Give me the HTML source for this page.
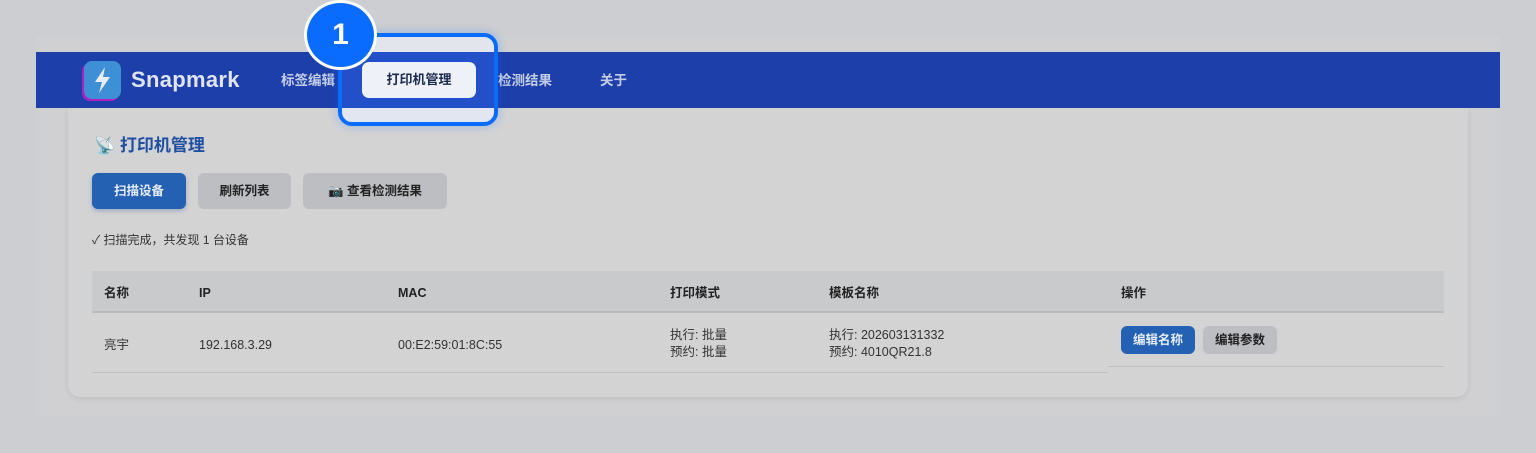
<!DOCTYPE html>
<html><head><meta charset="utf-8"><style>
*{box-sizing:border-box;margin:0;padding:0}
body{width:1536px;height:453px;background:#cdced1;font-family:"Liberation Sans","Noto Sans CJK SC",sans-serif;position:relative;overflow:hidden;color:#222}
div{line-height:1.2}
.frame{position:absolute;left:36px;top:37px;width:1464px;height:380px;background:#d0d0d2}
.nav{position:absolute;left:36px;top:52px;width:1464px;height:56px;background:#1d3fa9}
.logo{position:absolute;left:84px;top:61px;width:37px;height:38px;border-radius:8px;background:#3d8fd6;box-shadow:-2px 2px 0 #b020c0}
.brand{position:absolute;left:131px;top:67px;font-size:22px;font-weight:bold;color:#dfe4f0;letter-spacing:.3px}
.ni{position:absolute;top:73px;font-size:13.5px;font-weight:bold;color:#c5cde6}
.act{position:absolute;left:362px;top:62px;width:114px;height:36px;background:#eef1f8;border-radius:7px;font-size:13px;font-weight:bold;color:#1d2b50;text-align:center;line-height:36px;z-index:5}
.hl{position:absolute;left:338px;top:33px;width:160px;height:93px;border:4px solid #0a6cff;border-radius:14px;z-index:4;box-shadow:0 0 10px rgba(10,108,255,.3);background:linear-gradient(#e2e5ec 0,#e2e5ec 15px,#2350c8 15px,#2350c8 71px,#e2e6f0 71px)}
.badge{position:absolute;left:304px;top:0px;width:73px;height:70px;border-radius:50%;background:#0a6cff;border:3px solid #fff;color:#fff;font-size:30px;font-weight:bold;text-align:center;line-height:64px;z-index:6}
.card{position:absolute;left:68px;top:108px;width:1400px;height:289px;background:#d3d3d3;border-radius:0 0 12px 12px;box-shadow:0 2px 6px rgba(0,0,0,.08)}
.h{position:absolute;left:94px;top:136px;font-size:17px;font-weight:bold;color:#1f4fa3}
.btn{position:absolute;top:173px;height:36px;border-radius:6px;font-size:12.5px;font-weight:bold;text-align:center;line-height:36px;background:#bdbec1;color:#222}
.st{position:absolute;left:92px;top:233px;font-size:12px;color:#333}
.th{position:absolute;left:92px;top:271px;width:1352px;height:42px;background:#c9cacc;border-bottom:2px solid #b9bbc0}
.t{position:absolute;font-size:12.5px;color:#333;line-height:16px}
.b{font-weight:bold;color:#222}
.line{position:absolute;height:1px;background:#bfc0c4}
</style></head><body>
<div class="frame"></div>
<div class="nav"></div>
<div class="logo"><svg width="37" height="38" viewBox="0 0 37 38"><path d="M21 6 L11 21 H18 L15 32 L26 16 H19 Z" fill="#e8eef8"/></svg></div>
<div class="brand">Snapmark</div>
<div class="ni" style="left:281px">标签编辑</div>
<div class="ni" style="left:498px">检测结果</div>
<div class="ni" style="left:600px">关于</div>
<div class="card"></div>
<div class="hl"></div>
<div class="act">打印机管理</div>
<div class="badge">1</div>
<div class="h">📡 打印机管理</div>
<div class="btn" style="left:92px;width:94px;background:#2561b3;color:#e6ecf6;box-shadow:0 2px 4px rgba(30,80,160,.3)">扫描设备</div>
<div class="btn" style="left:198px;width:93px">刷新列表</div>
<div class="btn" style="left:303px;width:144px">📷 查看检测结果</div>
<div class="st">✓ 扫描完成，共发现 1 台设备</div>
<div class="th"></div>
<div class="t b" style="left:104px;top:285px">名称</div>
<div class="t b" style="left:199px;top:285px">IP</div>
<div class="t b" style="left:398px;top:285px">MAC</div>
<div class="t b" style="left:670px;top:285px">打印模式</div>
<div class="t b" style="left:829px;top:285px">模板名称</div>
<div class="t b" style="left:1121px;top:285px">操作</div>
<div class="t" style="left:104px;top:337px">亮宇</div>
<div class="t" style="left:199px;top:337px">192.168.3.29</div>
<div class="t" style="left:398px;top:337px">00:E2:59:01:8C:55</div>
<div class="t" style="left:670px;top:327px;line-height:17px">执行: 批量<br>预约: 批量</div>
<div class="t" style="left:829px;top:327px;line-height:17px">执行: 202603131332<br>预约: 4010QR21.8</div>
<div class="btn" style="left:1121px;top:326px;width:74px;height:28px;line-height:28px;background:#2561b3;color:#e6ecf6">编辑名称</div>
<div class="btn" style="left:1203px;top:326px;width:74px;height:28px;line-height:28px">编辑参数</div>
<div class="line" style="left:92px;top:372px;width:1016px"></div>
<div class="line" style="left:1108px;top:366px;width:336px"></div>
</body></html>
